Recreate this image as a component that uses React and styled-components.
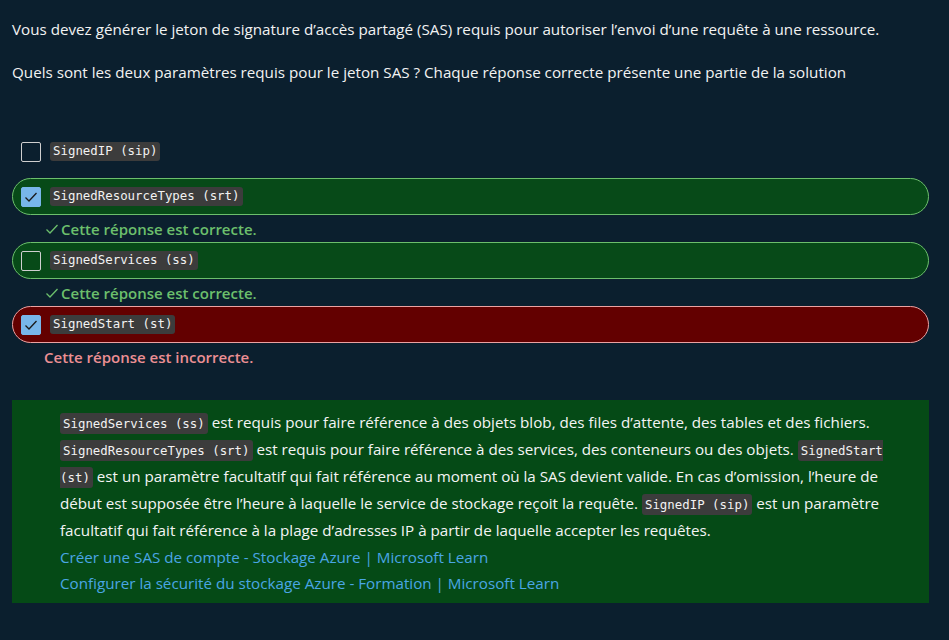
import React from "react";
import styled, { createGlobalStyle } from "styled-components";

const GlobalStyle = createGlobalStyle`
  html, body {
    margin: 0;
    padding: 0;
    background: #0b1f2e;
  }
  body {
    font-family: "Open Sans", "Noto Sans", sans-serif;
    color: #f2f2f2;
  }
`;

const Page = styled.div`
  box-sizing: border-box;
  width: 949px;
  min-height: 640px;
  padding: 17px 20px 30px 12px;
  background: #0b1f2e;
`;

const Question = styled.p`
  margin: 0 0 19px;
  font-size: 15.2px;
  line-height: 24px;
  color: #f2f2f2;
`;

const Options = styled.div`
  display: flex;
  flex-direction: column;
  margin-top: 49px;
`;

const Option = styled.label`
  box-sizing: border-box;
  display: flex;
  align-items: center;
  gap: 9px;
  height: 37px;
  flex: 0 0 37px;
  padding: 0 8px;
  border-radius: 19px;
  border: 1px solid
    ${props =>
      props.state === "correct"
        ? "#6cbf6c"
        : props.state === "wrong"
        ? "#eba2a2"
        : "transparent"};
  background: ${props =>
    props.state === "correct"
      ? "#074a18"
      : props.state === "wrong"
      ? "#630000"
      : "transparent"};
  margin-bottom: ${props => (props.spaced ? "8px" : "0")};
`;

const Box = styled.span`
  box-sizing: border-box;
  display: flex;
  align-items: center;
  justify-content: center;
  width: 20px;
  height: 20px;
  border-radius: 2px;
  border: 1px solid ${props => (props.checked ? "#78b6ea" : "#cfcfcf")};
  background: ${props => (props.checked ? "#78b6ea" : "transparent")};
`;

const Code = styled.code`
  font-family: "DejaVu Sans Mono", "Liberation Mono", monospace;
  font-size: 12.4px;
  line-height: 1;
  background: #3c3c3c;
  color: #f2f2f2;
  padding: 3px 3px;
  border-radius: 3px;
`;

const Feedback = styled.div`
  display: flex;
  align-items: center;
  gap: 2px;
  height: 27px;
  flex: 0 0 27px;
  padding-left: ${props => (props.ok ? "33px" : "32px")};
  font-size: 15px;
  font-weight: 600;
  color: ${props => (props.ok ? "#6cbf6c" : "#ec8f94")};
`;

const Explanation = styled.div`
  margin-top: 30px;
  background: #054a16;
  padding: 9px 42px 7px 48px;
  font-size: 15.2px;
  color: #f4f4f4;
`;

const Para = styled.p`
  margin: 0;
  line-height: 27px;
`;

const Link = styled.a`
  display: block;
  color: #4aa6e4;
  text-decoration: none;
  line-height: 26px;
`;

const Tick = ({ color, size = 14 }) => (
  <svg width={size} height={size} viewBox="0 0 14 14" fill="none">
    <path d="M1.5 7.5 L5 11 L12.5 3" stroke={color} strokeWidth="1.3" />
  </svg>
);

const options = [
  { label: "SignedIP (sip)", checked: false, state: null },
  { label: "SignedResourceTypes (srt)", checked: true, state: "correct", feedback: "ok" },
  { label: "SignedServices (ss)", checked: false, state: "correct", feedback: "ok" },
  { label: "SignedStart (st)", checked: true, state: "wrong", feedback: "bad" },
];

export default function App() {
  return (
    <Page>
      <GlobalStyle />
      <Question>
        Vous devez générer le jeton de signature d’accès partagé (SAS) requis pour autoriser l’envoi d’une requête à une ressource.
      </Question>
      <Question>
        Quels sont les deux paramètres requis pour le jeton SAS ? Chaque réponse correcte présente une partie de la solution
      </Question>

      <Options>
        {options.map(o => (
          <React.Fragment key={o.label}>
            <Option state={o.state} spaced={!o.feedback}>
              <Box checked={o.checked}>
                {o.checked && <Tick color="#1b1b1b" size={14} />}
              </Box>
              <Code>{o.label}</Code>
            </Option>
            {o.feedback === "ok" && (
              <Feedback ok>
                <Tick color="#6cbf6c" size={14} />
                Cette réponse est correcte.
              </Feedback>
            )}
            {o.feedback === "bad" && <Feedback>Cette réponse est incorrecte.</Feedback>}
          </React.Fragment>
        ))}
      </Options>

      <Explanation>
        <Para>
          <Code>SignedServices (ss)</Code> est requis pour faire référence à des objets blob, des files d’attente, des tables et des fichiers.{" "}
          <Code>SignedResourceTypes (srt)</Code> est requis pour faire référence à des services, des conteneurs ou des objets.{" "}
          <Code>SignedStart (st)</Code> est un paramètre facultatif qui fait référence au moment où la SAS devient valide. En cas d’omission, l’heure de début est supposée être l’heure à laquelle le service de stockage reçoit la requête.{" "}
          <Code>SignedIP (sip)</Code> est un paramètre facultatif qui fait référence à la plage d’adresses IP à partir de laquelle accepter les requêtes.
        </Para>
        <Link href="#">Créer une SAS de compte - Stockage Azure | Microsoft Learn</Link>
        <Link href="#">Configurer la sécurité du stockage Azure - Formation | Microsoft Learn</Link>
      </Explanation>
    </Page>
  );
}
